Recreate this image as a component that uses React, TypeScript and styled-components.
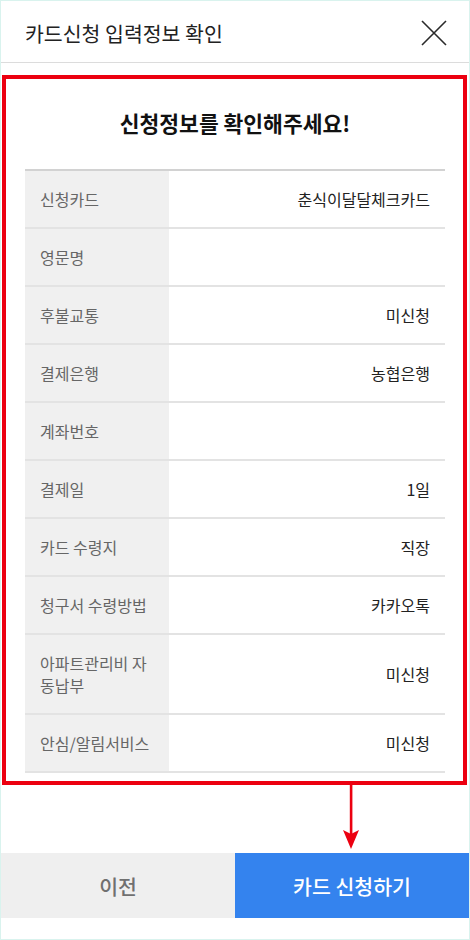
import React from 'react';
import styled, { createGlobalStyle } from 'styled-components';

const GlobalStyle = createGlobalStyle`
  html, body {
    margin: 0;
    padding: 0;
    background: #ffffff;
  }
  body {
    font-family: "Noto Sans CJK KR", "Noto Sans", sans-serif;
    color: #222222;
  }
  * {
    box-sizing: border-box;
  }
`;

const Frame = styled.div`
  width: 470px;
  height: 940px;
  border: 1px solid #d9f3ee;
  display: flex;
  flex-direction: column;
  background: #ffffff;
`;

const Header = styled.header`
  height: 62px;
  flex-shrink: 0;
  display: flex;
  align-items: center;
  justify-content: space-between;
  padding: 2px 22px 0 24px;
  border-bottom: 1px solid #dcdcdc;
`;

const HeaderTitle = styled.h1`
  margin: 0;
  font-size: 20.5px;
  font-weight: 400;
  color: #222222;
`;

const CloseButton = styled.button`
  width: 26px;
  height: 26px;
  padding: 0;
  border: none;
  background: transparent;
  display: flex;
  align-items: center;
  justify-content: center;
  cursor: pointer;
`;

const Content = styled.main`
  padding: 12px 2px 0 1px;
`;

const Highlight = styled.section`
  border: 4px solid #ec0010;
  padding: 0 18px 8px 19px;
`;

const Heading = styled.h2`
  margin: 0;
  padding-top: 30px;
  height: 90px;
  font-size: 21.5px;
  line-height: 28px;
  font-weight: 700;
  text-align: center;
  color: #111111;
`;

const Table = styled.div`
  border-top: 2px solid #d2d2d2;
`;

const Row = styled.div`
  display: grid;
  grid-template-columns: 144px 1fr;
  border-bottom: 2px solid #e3e3e3;
`;

const Label = styled.div`
  background: #f0f0f0;
  color: #666666;
  font-size: 16px;
  line-height: 22px;
  padding: 17px 15px;
  min-height: 56px;
`;

const Value = styled.div`
  display: flex;
  align-items: center;
  justify-content: flex-end;
  padding: 0 15px;
  font-size: 16px;
  line-height: 22px;
  color: #222222;
`;

const Gap = styled.div`
  flex: 1;
  position: relative;
`;

const Arrow = styled.svg`
  position: absolute;
  left: 342px;
  top: 0;
`;

const Footer = styled.footer`
  display: grid;
  grid-template-columns: 234px 1fr;
  height: 65px;
  margin-bottom: 21px;
  flex-shrink: 0;
`;

const FooterButton = styled.button<{ $primary?: boolean }>`
  border: none;
  margin: 0;
  font-family: inherit;
  font-size: 20.5px;
  font-weight: 500;
  background: ${({ $primary }) => ($primary ? '#3483ee' : '#efefef')};
  color: ${({ $primary }) => ($primary ? '#ffffff' : '#707070')};
  cursor: pointer;
`;

const rows: { label: string; value: string }[] = [
  { label: '신청카드', value: '춘식이달달체크카드' },
  { label: '영문명', value: '' },
  { label: '후불교통', value: '미신청' },
  { label: '결제은행', value: '농협은행' },
  { label: '계좌번호', value: '' },
  { label: '결제일', value: '1일' },
  { label: '카드 수령지', value: '직장' },
  { label: '청구서 수령방법', value: '카카오톡' },
  { label: '아파트관리비 자동납부', value: '미신청' },
  { label: '안심/알림서비스', value: '미신청' },
];

export default function App() {
  return (
    <>
      <GlobalStyle />
      <Frame>
        <Header>
          <HeaderTitle>카드신청 입력정보 확인</HeaderTitle>
          <CloseButton aria-label="닫기">
            <svg width="26" height="26" viewBox="0 0 26 26">
              <path d="M1 1 L25 25 M25 1 L1 25" stroke="#2a2a2a" strokeWidth="1.6" fill="none" />
            </svg>
          </CloseButton>
        </Header>
        <Content>
          <Highlight>
            <Heading>신청정보를 확인해주세요!</Heading>
            <Table>
              {rows.map((r) => (
                <Row key={r.label}>
                  <Label>{r.label}</Label>
                  <Value>{r.value}</Value>
                </Row>
              ))}
            </Table>
          </Highlight>
        </Content>
        <Gap>
          <Arrow width="16" height="66" viewBox="0 0 16 66">
            <rect x="6.8" y="0" width="2.6" height="50" fill="#ec0010" />
            <path d="M0 45 L8 49 L16 45 L8 64 Z" fill="#ec0010" />
          </Arrow>
        </Gap>
        <Footer>
          <FooterButton>이전</FooterButton>
          <FooterButton $primary>카드 신청하기</FooterButton>
        </Footer>
      </Frame>
    </>
  );
}
